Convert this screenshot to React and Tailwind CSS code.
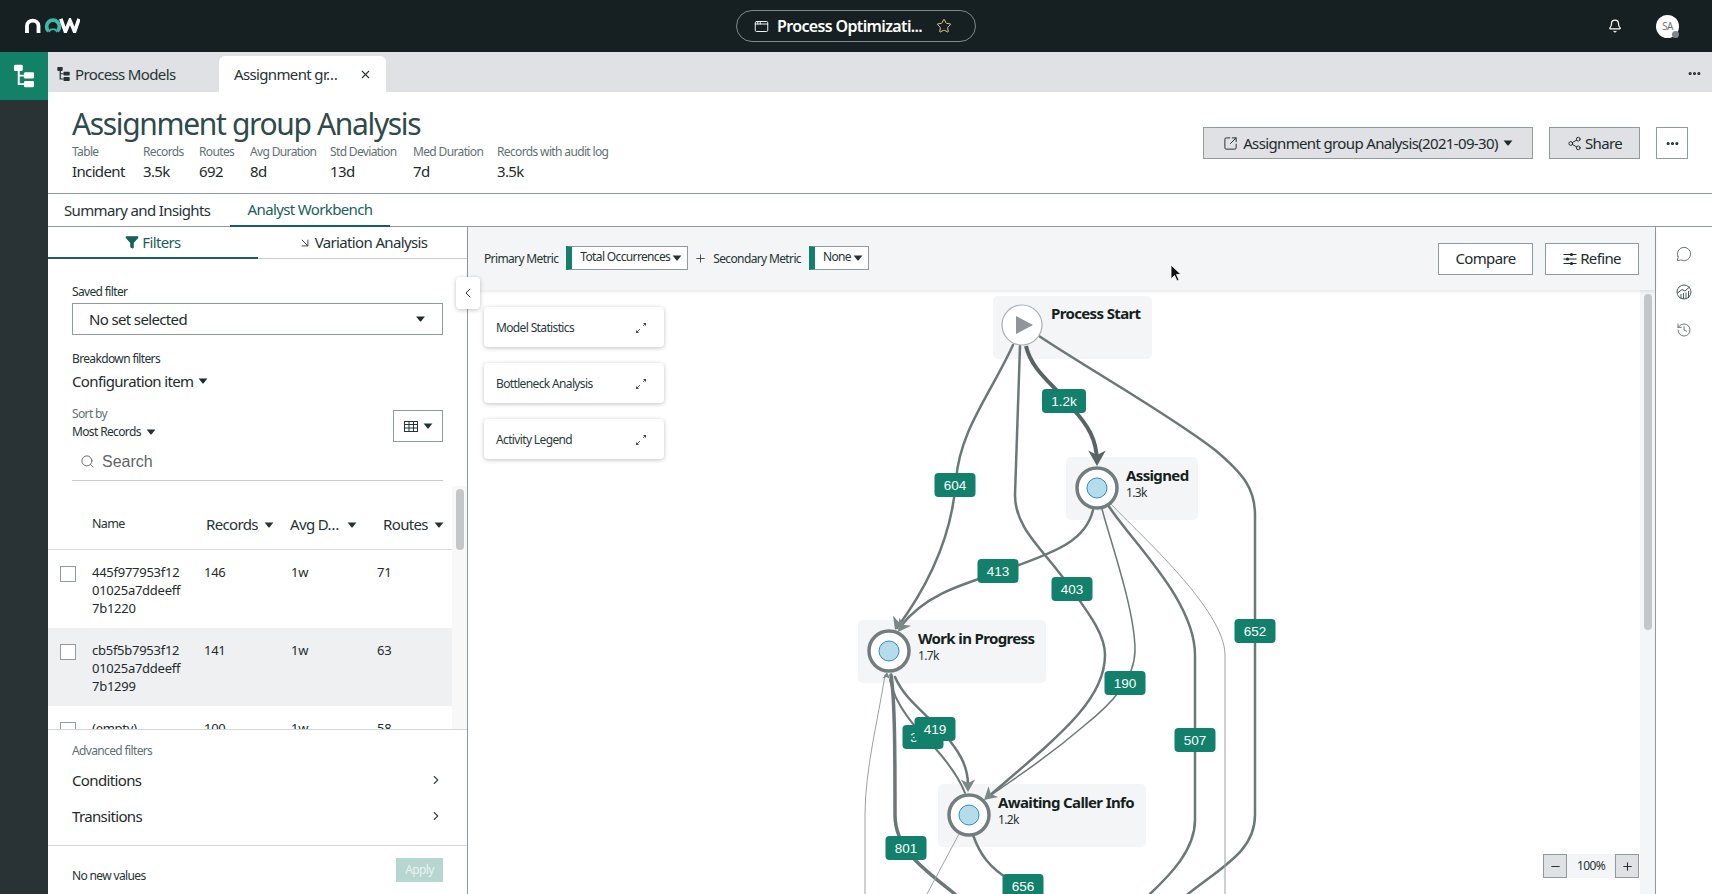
import React from 'react';
import {
  Bell, Star, X, Search, ChevronRight, ChevronLeft, Share2, SquareArrowOutUpRight, Ellipsis,
  MessageCircle, History, Plus, Minus, AppWindow, ArrowDownRight, Funnel,
} from 'lucide-react';

const stats = [
  ['Table', 'Incident'],
  ['Records', '3.5k'],
  ['Routes', '692'],
  ['Avg Duration', '8d'],
  ['Std Deviation', '13d'],
  ['Med Duration', '7d'],
  ['Records with audit log', '3.5k'],
];

const rows = [
  { name: ['445f977953f12', '01025a7ddeeff', '7b1220'], records: '146', avg: '1w', routes: '71' },
  { name: ['cb5f5b7953f12', '01025a7ddeeff', '7b1299'], records: '141', avg: '1w', routes: '63', active: true },
  { name: ['(empty)'], records: '100', avg: '1w', routes: '58' },
];

// edges of the process graph, in page coordinates
const edges = [
  { d: 'M1013 345 C990 395 960 430 956 480 C952 540 925 590 897 628', w: 2.5 },
  { d: 'M1020 346 L1015 495 C1015 530 1045 550 1072 590 C1090 615 1105 635 1105 655 C1105 700 1060 735 988 797', w: 2.5 },
  { d: 'M1039 336 C1090 370 1170 415 1215 450 C1245 475 1255 490 1255 515 L1255 815 C1255 850 1225 865 1188 894', w: 2.5 },
  { d: 'M1093 510 C1085 545 1045 555 1000 572 C960 585 925 595 900 627', w: 2.5 },
  { d: 'M1102 509 C1110 540 1135 610 1135 650 C1135 680 1110 705 1085 725 C1050 755 1020 775 988 797', w: 1.5 },
  { d: 'M1108 505 C1130 540 1195 600 1195 655 L1195 820 C1195 850 1170 875 1150 894', w: 2.5 },
  { d: 'M1110 503 C1140 535 1225 610 1225 655 L1225 894', w: 1, c: '#9aa2a4' },
  { d: 'M895 677 C905 700 925 712 945 735 C958 750 968 765 968 785', w: 2.5 },
  { d: 'M890 680 C895 705 915 728 935 748 C950 765 960 780 965 793', w: 2 },
  { d: 'M891 675 C895 700 895 760 895 815 C895 850 925 870 955 894', w: 3.5 },
  { d: 'M885 675 C878 720 865 770 865 815 L865 894', w: 1, c: '#9aa2a4' },
  { d: 'M973 835 C980 855 990 868 1010 880', w: 2.5 },
  { d: 'M959 834 L927 894', w: 1, c: '#9aa2a4' },
];

const arrows = [
  { x: 1097, y: 466, a: 0, s: 1.1, c: '#5a6464' },
  { x: 895, y: 630, a: 22, s: 0.9 },
  { x: 898, y: 632, a: 35, s: 0.9 },
  { x: 968, y: 792, a: 0, s: 0.9 },
  { x: 984, y: 800, a: 48, s: 0.9 },
  { x: 887, y: 672, a: 185, s: 0.5 },
];

const labels = [
  { t: '1.2k', x: 1064, y: 401, w: 44 },
  { t: '604', x: 955, y: 485 },
  { t: '413', x: 998, y: 571 },
  { t: '403', x: 1072, y: 589 },
  { t: '652', x: 1255, y: 631 },
  { t: '190', x: 1125, y: 683 },
  { t: '507', x: 1195, y: 740 },
  { t: '3', x: 923, y: 737 },
  { t: '419', x: 935, y: 729 },
  { t: '801', x: 906, y: 848 },
  { t: '656', x: 1023, y: 886 },
];

const circles = [[1097, 488], [889, 651], [969, 815]];

function Caret({ className = '' }) {
  return (
    <svg viewBox="0 0 10 6" className={`inline-block w-[10px] h-[6px] fill-current shrink-0 ${className}`}>
      <path d="M0.6 0.4 H9.4 L5.4 5.4 Q5 5.8 4.6 5.4 Z" />
    </svg>
  );
}

function NowLogo() {
  return (
    <svg viewBox="0 0 55 15" className="w-[55px] h-[15px]" fill="none">
      <path d="M2 15 V8 C2 0.8 13.5 0.8 13.5 8 V15" stroke="#fff" strokeWidth="3.8" />
      <path d="M23.6 13.2 A6.4 6.4 0 1 1 32.4 13.2" stroke="#3fb8a4" strokeWidth="3.8" />
      <path d="M23.8 14 L26 11.4 H30 L32.2 14" stroke="#3fb8a4" strokeWidth="1.6" />
      <path d="M35.8 0.8 L40.4 13.6 L45 2.6 L49.6 13.6 L54 0.8" stroke="#fff" strokeWidth="3.6" />
    </svg>
  );
}

function TreeIcon({ className = '' }) {
  return (
    <svg viewBox="0 0 16 18" className={className} fill="currentColor">
      <rect x="0" y="0" width="7" height="5" rx="1" />
      <rect x="8" y="6" width="8" height="5" rx="1" />
      <rect x="8" y="13" width="8" height="5" rx="1" />
      <path d="M3 5 H4.6 V8 H8 V9.4 H4.6 V14.8 H8 V16.2 H3 Z" />
    </svg>
  );
}

function RefineIcon() {
  return (
    <svg viewBox="0 0 14 14" className="w-[14px] h-[14px]" fill="currentColor" stroke="currentColor" strokeWidth="1.1">
      <path d="M0.5 2.5 H13.5 M0.5 7 H13.5 M0.5 11.5 H13.5" />
      <circle cx="8.5" cy="2.5" r="1.6" stroke="none" />
      <circle cx="4.5" cy="7" r="1.6" stroke="none" />
      <circle cx="8.5" cy="11.5" r="1.6" stroke="none" />
    </svg>
  );
}

function GaugeChart() {
  return (
    <svg viewBox="0 0 16 16" className="w-4 h-4 text-[#4a5859]" fill="none" stroke="currentColor" strokeWidth="1">
      <circle cx="8" cy="8" r="7" />
      <path d="M1.5 9 L6 5.5 L9 7 L13.5 3" />
      <path d="M5 15 V10 M7.5 15 V9 M10 15 V8.5 M12.5 14 V7" />
    </svg>
  );
}

function ExpandIcon() {
  return (
    <svg viewBox="0 0 12 12" className="w-3 h-3 text-[#3f4d4e]" fill="currentColor" stroke="currentColor" strokeWidth="0.8">
      <path d="M2 10 L5 7" />
      <path d="M1 11 V8 L4 11 Z" stroke="none" />
      <path d="M8 4 L10 2" />
      <path d="M11 1 V4 L8 1 Z" stroke="none" />
    </svg>
  );
}

function TableIcon() {
  return (
    <svg viewBox="0 0 14 11" className="w-[14px] h-[11px]" fill="none" stroke="currentColor" strokeWidth="1">
      <rect x="0.5" y="0.5" width="13" height="10" strokeWidth="1" />
      <path d="M0.5 3.5 H13.5 M0.5 7 H13.5 M5 0.5 V10.5 M9.5 0.5 V10.5" />
    </svg>
  );
}

function Checkbox() {
  return <div className="w-4 h-4 border border-[#8f9a9d] bg-white shrink-0" />;
}

function MetricSelect({ label, className }) {
  return (
    <div className={`h-6 bg-white border border-[#8f9a9d] border-l-[6px] border-l-[#12806a] flex items-center justify-between pl-2 pr-[5px] text-[12px] whitespace-nowrap -mt-[1px] ${className}`}>
      <span className="-mt-[2px]">{label}</span>
      <Caret className="w-[8px]" />
    </div>
  );
}

function PanelCard({ title }) {
  return (
    <div className="h-10 bg-white rounded-[4px] shadow-[0_1px_4px_rgba(0,0,0,0.25)] flex items-center justify-between pl-3 pr-[17px] pt-[2px] text-[12px] text-[#2a3a3b]">
      <span>{title}</span>
      <ExpandIcon />
    </div>
  );
}

function Node({ name, count, className }) {
  return (
    <div className={`absolute h-[63px] bg-[#f4f5f7] rounded-[5px] pt-2 ${className}`}>
      <div className="text-[15px] leading-[20px] font-bold text-[#151f20]">{name}</div>
      {count && <div className="text-[12px] leading-[16px] text-[#253334]">{count}</div>}
    </div>
  );
}

function Graph() {
  return (
    <svg viewBox="468 290 1172 604" className="absolute inset-0 w-full h-full" fill="none">
      {edges.map((e, i) => (
        <path key={i} d={e.d} stroke={e.c || '#6d7777'} strokeWidth={e.w} strokeLinecap="round" />
      ))}
      <path d="M1026 346 C1032 372 1055 385 1072 408 C1088 425 1097 440 1097 462" stroke="#5a6464" strokeWidth="4" />
      {arrows.map((a, i) => (
        <path
          key={i}
          d="M0 0 L-8 -14 L0 -10 L8 -14 Z"
          fill={a.c || '#7c8787'}
          transform={`translate(${a.x} ${a.y}) rotate(${a.a}) scale(${a.s})`}
        />
      ))}
      <circle cx="1022" cy="325" r="20" fill="#fff" stroke="#a9b0b2" strokeWidth="1.2" />
      <path d="M1016 316 L1033 325 L1016 334 Z" fill="#8f9598" />
      {circles.map(([cx, cy]) => (
        <g key={cx}>
          <circle cx={cx} cy={cy} r="20" fill="#fff" stroke="#737d7e" strokeWidth="3.5" />
          <circle cx={cx} cy={cy} r="10" fill="#b4dcea" stroke="#2f8fc4" strokeWidth="1" />
        </g>
      ))}
      {labels.map((l) => {
        const w = l.w || 41;
        return (
          <g key={l.t}>
            <rect x={l.x - w / 2} y={l.y - 12} width={w} height="24" rx="4" fill="#12806a" />
            <text x={l.t === '3' ? l.x - 9 : l.x} y={l.y + 5} textAnchor="middle" fill="#fff" className="text-[13.5px] font-['Liberation_Sans',sans-serif] tracking-normal">
              {l.t}
            </text>
          </g>
        );
      })}
    </svg>
  );
}

function LeftPanel() {
  return (
    <div className="w-[420px] shrink-0 border-r border-[#8f9a9d] bg-white flex flex-col min-h-0">
      <div className="h-[32px] flex text-[15px] shrink-0">
        <div className="w-[210px] border-b-2 border-[#1a5f59] flex items-center justify-center gap-[3px] text-[#1a5f59]">
          <Funnel size={14} fill="currentColor" />
          Filters
        </div>
        <div className="flex-1 border-b border-[#c9ced1] flex items-center justify-center gap-[3px] text-[#253334]">
          <ArrowDownRight size={14} strokeWidth={1.5} />
          Variation Analysis
        </div>
      </div>

      <div className="px-6 shrink-0">
        <div className="text-[12px] leading-4 mt-[25px] text-[#253334]">Saved filter</div>
        <div className="h-8 mt-[3px] border border-[#8f9a9d] flex items-center justify-between pl-4 pr-4 text-[15px] text-[#1d2b2b]">
          No set selected
          <Caret className="w-[11px]" />
        </div>
        <div className="text-[12px] leading-4 mt-4 text-[#253334]">Breakdown filters</div>
        <div className="text-[15px] leading-6 mt-[2px] flex items-center gap-[5px] text-[#1d2b2b]">
          Configuration item <Caret />
        </div>
        <div className="flex items-start justify-between mt-[13px]">
          <div>
            <div className="text-[12px] leading-4 text-[#5f7173]">Sort by</div>
            <div className="text-[12px] leading-4 mt-[2px] flex items-center gap-[5px] text-[#253334]">
              Most Records <Caret className="w-[8px]" />
            </div>
          </div>
          <div className="w-[50px] h-8 mt-1 border border-[#8f9a9d] flex items-center justify-center gap-[5px] text-[#253334]">
            <TableIcon />
            <Caret />
          </div>
        </div>
        <div className="h-[38px] mt-[1px] border-b border-[#c9ced1] flex items-center pl-2 gap-[7px] text-[#5f6668]">
          <Search size={15} strokeWidth={1.5} />
          <span className="text-[16px] font-['Liberation_Sans',sans-serif] tracking-normal">Search</span>
        </div>
      </div>

      <div className="flex-1 min-h-0 overflow-hidden flex mt-[5px]">
        <div className="flex-1 min-w-0">
          <div className="h-[64px] grid grid-cols-[44px_114px_84px_93px_1fr] items-center border-b border-[#d8dcdf] pt-[14px] text-[15px] text-[#253334]">
            <span />
            <span className="text-[12.5px] text-[#253334]">Name</span>
            <span className="flex items-center gap-[6px]">Records <Caret /></span>
            <span className="flex items-center gap-[8px]">Avg D… <Caret /></span>
            <span className="flex items-center gap-[6px]">Routes <Caret /></span>
          </div>
          {rows.map((r) => (
            <div key={r.records} className={`h-[78px] flex pt-[13px] text-[13px] leading-[18px] tracking-[-0.02em] text-[#1d2b2b] ${r.active ? 'bg-[#eef0f2]' : 'bg-white'}`}>
              <div className="w-[44px] pl-3 pt-[3px]"><Checkbox /></div>
              <div className="w-[112px]">
                {r.name.map((n) => <div key={n}>{n}</div>)}
              </div>
              <div className="w-[87px]">{r.records}</div>
              <div className="w-[86px]">{r.avg}</div>
              <div>{r.routes}</div>
            </div>
          ))}
        </div>
        <div className="w-[15px] bg-[#f8f8f9] shrink-0 flex justify-center">
          <div className="w-2 h-[61px] mt-[3px] rounded bg-[#c4c6c7]" />
        </div>
      </div>

      <div className="h-[116px] shrink-0 border-t border-[#d2d7da] px-6 pt-[13px]">
        <div className="text-[12px] leading-4 text-[#5f7173]">Advanced filters</div>
        <div className="mt-[3px] h-9 flex items-center justify-between text-[15px] text-[#1d2b2b]">
          Conditions <ChevronRight size={14} className="text-[#3c4a4b]" />
        </div>
        <div className="h-9 flex items-center justify-between text-[15px] text-[#1d2b2b]">
          Transitions <ChevronRight size={14} className="text-[#3c4a4b]" />
        </div>
      </div>
      <div className="h-[49px] shrink-0 border-t border-[#d2d7da] px-6 flex items-start justify-between pt-3">
        <span className="text-[12px] leading-4 mt-[10px] text-[#253334]">No new values</span>
        <span className="w-[47px] h-6 bg-[#b7d6cf] text-[#e8f3f0] text-[12px] flex items-center justify-center">Apply</span>
      </div>
    </div>
  );
}

function Workbench() {
  return (
    <div className="flex-1 min-w-0 flex flex-col bg-[#f4f5f7]">
      <div className="h-[63px] shrink-0 flex items-center pl-4 pr-4 text-[12px] text-[#253334] shadow-[0_2px_3px_rgba(0,0,0,0.08)] z-10">
        <span>Primary Metric</span>
        <MetricSelect label="Total Occurrences" className="w-[122px] ml-2" />
        <Plus size={13} className="mx-[6px]" strokeWidth={1.5} />
        <span>Secondary Metric</span>
        <MetricSelect label="None" className="w-[60px] ml-2" />
        <button className="ml-auto w-[95px] h-8 bg-white border border-[#8f9a9d] text-[15px] text-[#1d2b2b]">Compare</button>
        <button className="ml-3 w-[94px] h-8 bg-white border border-[#8f9a9d] text-[15px] text-[#1d2b2b] flex items-center justify-center gap-[3px]">
          <RefineIcon />
          Refine
        </button>
      </div>
      <div className="flex-1 min-h-0 flex">
        <div className="relative flex-1 min-w-0 bg-white overflow-hidden">
          <Node name="Process Start" className="left-[525px] top-[6px] w-[159px] pl-[58px] !pt-[7px]" />
          <Node name="Assigned" count="1.3k" className="left-[598px] top-[167px] w-[132px] pl-[60px]" />
          <Node name="Work in Progress" count="1.7k" className="left-[390px] top-[330px] w-[188px] pl-[60px]" />
          <Node name="Awaiting Caller Info" count="1.2k" className="left-[470px] top-[494px] w-[208px] pl-[60px]" />
          <Graph />
          <div className="absolute left-[16px] top-[17px] w-[180px] flex flex-col gap-4">
            <PanelCard title="Model Statistics" />
            <PanelCard title="Bottleneck Analysis" />
            <PanelCard title="Activity Legend" />
          </div>
          <div className="absolute right-px bottom-4 flex items-center h-6 text-[12px] text-[#253334]">
            <span className="w-6 h-6 bg-[#dfe1e4] border border-[#8f9a9d] flex items-center justify-center"><Minus size={13} /></span>
            <span className="w-12 h-6 bg-[#f4f5f7] flex items-center justify-center">100%</span>
            <span className="w-6 h-6 bg-[#dfe1e4] border border-[#8f9a9d] flex items-center justify-center"><Plus size={13} /></span>
          </div>
        </div>
        <div className="w-[15px] shrink-0 flex justify-center pt-1">
          <div className="w-2 h-[336px] rounded bg-[#c4c6c7]" />
        </div>
      </div>
    </div>
  );
}

export default function App() {
  return (
    <div className="relative h-screen w-full overflow-hidden flex flex-col bg-white font-['Noto_Sans',sans-serif] tracking-[-0.04em] text-[#1d2b2b]">
      {/* Top bar */}
      <div className="h-[52px] shrink-0 bg-[#161f21] grid grid-cols-[1fr_auto_1fr] items-center text-white">
        <div className="pl-[25px] -mt-[1px]"><NowLogo /></div>
        <div className="w-[240px] h-8 rounded-full border border-[#7b8a8a] flex items-center pl-[17px] gap-[8px]">
          <AppWindow size={15} strokeWidth={1.5} />
          <span className="text-[16px] font-semibold">Process Optimizati...</span>
          <Star size={16} strokeWidth={1.5} className="text-[#e0c882] ml-[6px]" />
        </div>
        <div className="flex items-center justify-end gap-[34px] pr-[33px]">
          <Bell size={14} />
          <div className="relative w-[23px] h-[23px] rounded-full bg-white text-[#6a7577] text-[10px] flex items-center justify-center">
            SA
            <span className="absolute right-0 bottom-0 w-[7px] h-[7px] rounded-full bg-[#7d8688]" />
          </div>
        </div>
      </div>

      <div className="flex-1 min-h-0 flex">
        {/* Left rail */}
        <div className="w-12 shrink-0 bg-[#293335]">
          <div className="h-12 bg-[#138068] flex items-center justify-center text-white">
            <TreeIcon className="w-5 h-6" />
          </div>
        </div>

        <div className="flex-1 min-w-0 flex flex-col">
          {/* Tabs */}
          <div className="h-10 shrink-0 bg-[#dfe1e4] flex items-end text-[15px]">
            <div className="h-full flex items-center pl-[9px] pt-1 w-[171px] gap-[5px] text-[#253334]">
              <TreeIcon className="w-[13px] h-[14px]" />
              Process Models
            </div>
            <div className="h-9 w-[167px] bg-white rounded-t-[6px] flex items-center pl-[15px] text-[#253334]">
              <span className="w-[125px]">Assignment gr…</span>
              <X size={13} />
            </div>
            <Ellipsis size={15} strokeWidth={3} className="ml-auto mr-[10px] mb-[11px]" />
          </div>

          {/* Page heading */}
          <div className="h-[102px] shrink-0 border-b border-[#8f9a9d] pl-6 pr-6 flex items-start justify-between">
            <div>
              <h1 className="text-[30px] leading-[38px] mt-[13px] tracking-[-0.045em] text-[#2e4a4a]">Assignment group Analysis</h1>
              <div className="grid grid-cols-[71px_56px_51px_80px_83px_84px_auto] mt-[1px]">
                {stats.map(([label]) => <span key={label} className="text-[12px] leading-4 text-[#5f7173]">{label}</span>)}
                {stats.map(([label, value]) => <span key={label} className="text-[15px] leading-[22px] text-[#1d2b2b]">{value}</span>)}
              </div>
            </div>
            <div className="flex items-center gap-4 mt-[35px] text-[15px]">
              <button className="w-[330px] h-8 bg-[#dfe1e4] border border-[#8f9a9d] flex items-center justify-center gap-[5px]">
                <SquareArrowOutUpRight size={15} strokeWidth={1.5} />
                Assignment group Analysis(2021-09-30)
                <Caret />
              </button>
              <button className="w-[91px] h-8 bg-[#dfe1e4] border border-[#8f9a9d] flex items-center justify-center gap-[3px]">
                <Share2 size={15} strokeWidth={1.5} />
                Share
              </button>
              <button className="w-8 h-8 border border-[#8f9a9d] flex items-center justify-center">
                <Ellipsis size={15} strokeWidth={3} />
              </button>
            </div>
          </div>

          {/* Sub tabs */}
          <div className="h-[33px] shrink-0 border-b border-[#8f9a9d] flex text-[15px]">
            <div className="w-[182px] pl-4 flex items-center text-[#253334]">Summary and Insights</div>
            <div className="w-[160px] flex items-center justify-center text-[#1a5f59] border-b-2 border-[#1a5f59] h-[33px]">Analyst Workbench</div>
          </div>

          {/* Workspace */}
          <div className="relative flex-1 min-h-0 flex">
            <LeftPanel />
            <Workbench />
            <div className="w-[57px] shrink-0 border-l border-[#8f9a9d] flex flex-col items-center pt-[19px] gap-[22px] text-[#4a5859]">
              <MessageCircle size={16} strokeWidth={1.2} />
              <GaugeChart />
              <History size={16} strokeWidth={1.2} />
            </div>
            <div className="absolute left-[408px] top-[50px] w-6 h-8 bg-white rounded-[4px] shadow-[0_1px_4px_rgba(0,0,0,0.25)] flex items-center justify-center z-20">
              <ChevronLeft size={16} strokeWidth={1.4} />
            </div>
          </div>
        </div>
      </div>

      {/* Mouse pointer */}
      <svg viewBox="0 0 12 18" className="absolute left-[1170px] top-[264px] w-3 h-[18px] z-30">
        <path d="M1 1 V15 L4.5 11.5 L7 17 L9 16 L6.5 10.5 H11 Z" fill="#111" stroke="#fff" strokeWidth="0.8" />
      </svg>
    </div>
  );
}
